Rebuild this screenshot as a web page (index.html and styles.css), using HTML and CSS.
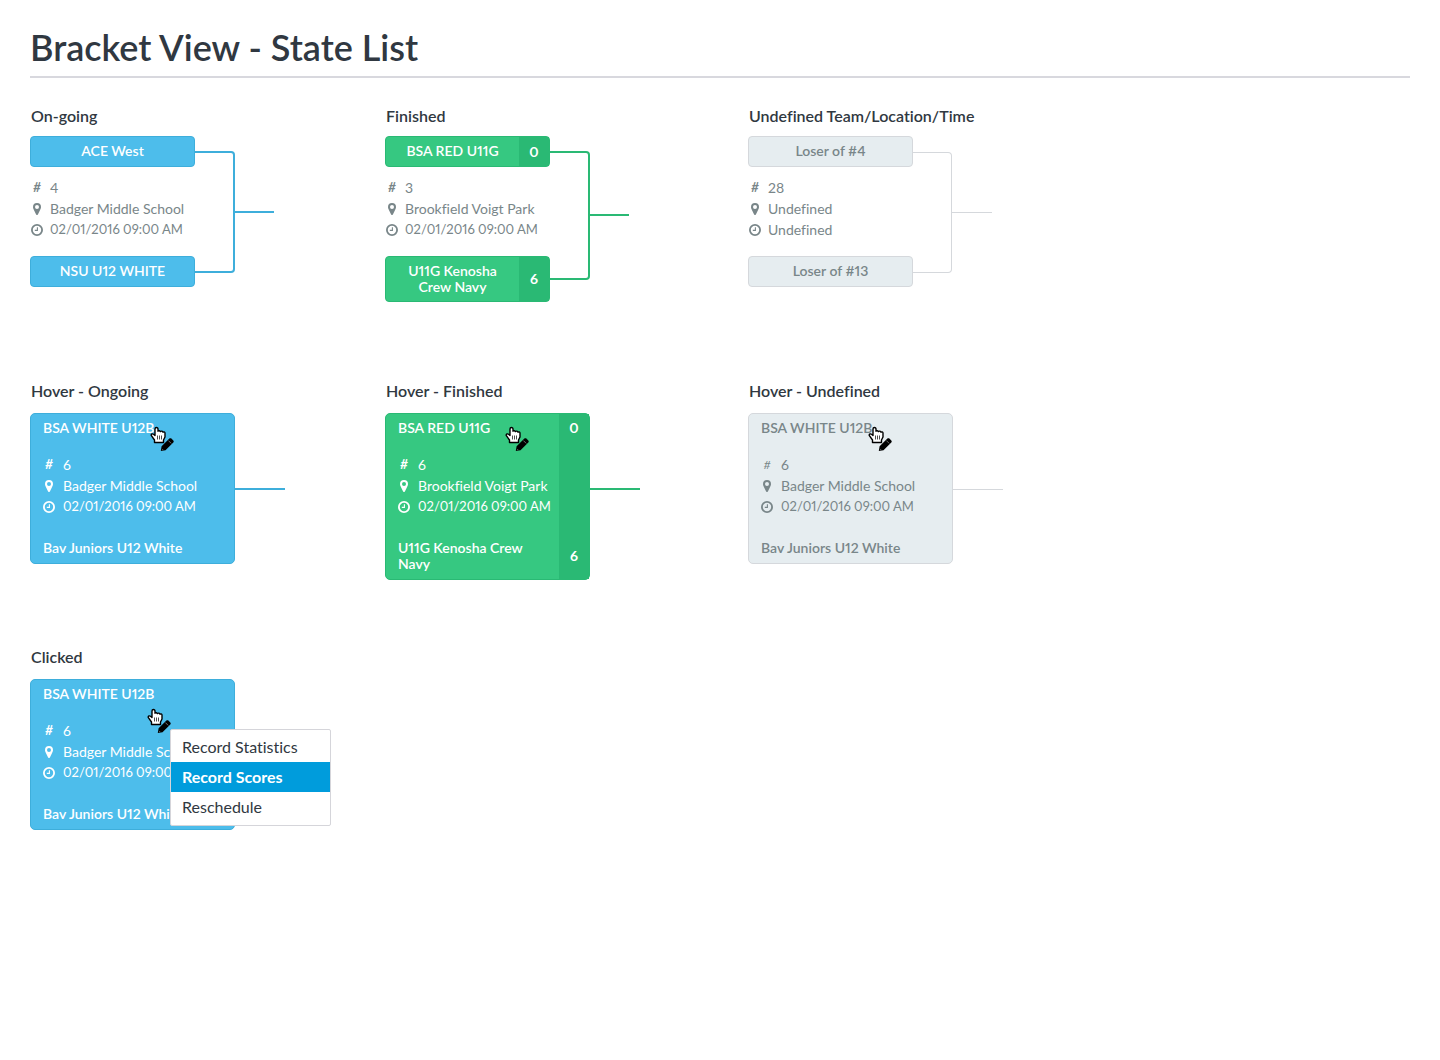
FILE: index.html
```html
<!DOCTYPE html>
<html lang="en">
<head>
<meta charset="utf-8">
<meta name="viewport" content="width=device-width, initial-scale=1">
<title>Bracket View - State List</title>
<link rel="stylesheet" href="styles.css">
</head>
<body>
<svg class="sprite" aria-hidden="true">
  <symbol id="pin" viewBox="0 0 12 12"><path fill-rule="evenodd" d="M6 0a4 4 0 0 0-4 4c0 1.200.4 1.900.8 2.700L5.100 11.500c.3.700 1.500.700 1.800 0L9.200 6.700C9.600 5.900 10 5.200 10 4a4 4 0 0 0-4-4zM6 2.100a2 2 0 1 1 0 4 2 2 0 0 1 0-4z"/></symbol>
  <symbol id="clock" viewBox="0 0 12 12"><circle cx="6" cy="6" r="5.100" fill="none" stroke="currentColor" stroke-width="1.800"/><path d="M6.400 3.200v3.200H3.800" fill="none" stroke="currentColor" stroke-width="1.100"/></symbol>
  <symbol id="hand" viewBox="0 0 24 26">
    <path d="M6.500 1.500c-1 0-1.500.7-1.500 1.500v6.500L3.500 8.200C2.600 7.500 1 8 1.200 9.300L4.500 14v2.500h9V14l1.500-3V7c0-1-1.300-1.500-2-.8-.3-1.200-1.900-1.400-2.500-.6-.5-1-1.900-1.200-2.500-.4V3c0-.8-.500-1.500-1.500-1.500z" fill="#fff" stroke="#000" stroke-width="1.400" stroke-linejoin="round"/>
    <path d="M7.500 9.500v4M9.500 9.500v4M11.500 9.500v4" stroke="#000" stroke-width=".7"/>
    <path d="M10.800 25l.8-4.800 7.800-7.600c.6-.6 1.400-.6 2 0l1.900 1.900c.6.6.6 1.400 0 2l-7.800 7.700z" fill="#000"/>
    <path d="M12.200 23.600l1 .1M18.400 14.600l2.800 2.800" stroke="#bbb" stroke-width=".6"/>
  </symbol>
</svg>
<main class="page">
  <h1 class="title">Bracket View - State List</h1>
  <div class="states">

    <section class="state">
      <h2 class="label">On-going</h2>
      <div class="bracket ongoing">
        <div class="match">
          <div class="team"><span class="name">ACE West</span></div>
          <ul class="info">
            <li><b class="hash">#</b>4</li>
            <li><svg class="icon"><use href="#pin"/></svg>Badger Middle School</li>
            <li class="time"><svg class="icon"><use href="#clock"/></svg>02/01/2016 09:00 AM</li>
          </ul>
          <div class="team"><span class="name">NSU U12 WHITE</span></div>
        </div>
        <div class="joint"></div>
        <div class="out"></div>
      </div>
    </section>

    <section class="state">
      <h2 class="label">Finished</h2>
      <div class="bracket finished">
        <div class="match">
          <div class="team"><span class="name">BSA RED U11G</span><span class="score">0</span></div>
          <ul class="info">
            <li><b class="hash">#</b>3</li>
            <li><svg class="icon"><use href="#pin"/></svg>Brookfield Voigt Park</li>
            <li class="time"><svg class="icon"><use href="#clock"/></svg>02/01/2016 09:00 AM</li>
          </ul>
          <div class="team"><span class="name">U11G Kenosha Crew Navy</span><span class="score">6</span></div>
        </div>
        <div class="joint"></div>
        <div class="out"></div>
      </div>
    </section>

    <section class="state">
      <h2 class="label">Undefined Team/Location/Time</h2>
      <div class="bracket undefined">
        <div class="match">
          <div class="team"><span class="name">Loser of #4</span></div>
          <ul class="info">
            <li><b class="hash">#</b>28</li>
            <li><svg class="icon"><use href="#pin"/></svg>Undefined</li>
            <li><svg class="icon"><use href="#clock"/></svg>Undefined</li>
          </ul>
          <div class="team"><span class="name">Loser of #13</span></div>
        </div>
        <div class="joint"></div>
        <div class="out"></div>
      </div>
    </section>

    <section class="state">
      <h2 class="label">Hover - Ongoing</h2>
      <div class="hover ongoing">
        <div class="card">
          <div class="body">
            <div class="name">BSA WHITE U12B</div>
            <ul class="info">
              <li><b class="hash">#</b>6</li>
              <li><svg class="icon"><use href="#pin"/></svg>Badger Middle School</li>
              <li class="time"><svg class="icon"><use href="#clock"/></svg>02/01/2016 09:00 AM</li>
            </ul>
            <div class="name">Bav Juniors U12 White</div>
          </div>
          <svg class="pointer"><use href="#hand"/></svg>
        </div>
        <div class="out"></div>
      </div>
    </section>

    <section class="state">
      <h2 class="label">Hover - Finished</h2>
      <div class="hover finished">
        <div class="card">
          <div class="body">
            <div class="name">BSA RED U11G</div>
            <ul class="info">
              <li><b class="hash">#</b>6</li>
              <li><svg class="icon"><use href="#pin"/></svg>Brookfield Voigt Park</li>
              <li class="time"><svg class="icon"><use href="#clock"/></svg>02/01/2016 09:00 AM</li>
            </ul>
            <div class="name">U11G Kenosha Crew Navy</div>
          </div>
          <div class="scores"><span>0</span><span>6</span></div>
          <svg class="pointer"><use href="#hand"/></svg>
        </div>
        <div class="out"></div>
      </div>
    </section>

    <section class="state">
      <h2 class="label">Hover - Undefined</h2>
      <div class="hover undefined">
        <div class="card">
          <div class="body">
            <div class="name">BSA WHITE U12B</div>
            <ul class="info">
              <li><span class="hash hash-light">#</span>6</li>
              <li><svg class="icon"><use href="#pin"/></svg>Badger Middle School</li>
              <li class="time"><svg class="icon"><use href="#clock"/></svg>02/01/2016 09:00 AM</li>
            </ul>
            <div class="name">Bav Juniors U12 White</div>
          </div>
          <svg class="pointer"><use href="#hand"/></svg>
        </div>
        <div class="out"></div>
      </div>
    </section>

    <section class="state">
      <h2 class="label">Clicked</h2>
      <div class="hover ongoing">
        <div class="card">
          <div class="body">
            <div class="name">BSA WHITE U12B</div>
            <ul class="info">
              <li><b class="hash">#</b>6</li>
              <li><svg class="icon"><use href="#pin"/></svg>Badger Middle School</li>
              <li class="time"><svg class="icon"><use href="#clock"/></svg>02/01/2016 09:00 AM</li>
            </ul>
            <div class="name">Bav Juniors U12 White</div>
          </div>
          <svg class="pointer pointer-clicked"><use href="#hand"/></svg>
          <div class="menu">
            <button type="button" class="item">Record Statistics</button>
            <button type="button" class="item active">Record Scores</button>
            <button type="button" class="item">Reschedule</button>
          </div>
        </div>
      </div>
    </section>

  </div>
</main>
</body>
</html>
```
FILE: styles.css
```css
* { box-sizing: border-box; }

body {
  margin: 0;
  background: #fff;
  color: #303841;
  font-family: Lato, "Liberation Sans", sans-serif;
  font-variant-numeric: proportional-nums;
  font-variant-ligatures: none;
}

.sprite { display: none; }

.page { padding: 23px 30px 40px; }

.title {
  margin: 0 0 28px;
  padding-bottom: 5px;
  border-bottom: 2px solid #d8d8de;
  font-size: 36px;
  line-height: 48px;
  font-weight: 600;
}

.states {
  display: grid;
  grid-template-columns: 355fr 363fr 662fr;
  grid-template-rows: 275px 266px auto;
}

.label {
  margin: 0;
  padding-left: 1px;
  font-size: 16px;
  line-height: 20px;
  font-weight: 600;
}

/* state colours */
.ongoing { --fill: #4dbdeb; --line: #3eaedb; --text: #fff; --stroke: 2px; }
.finished { --fill: #36c881; --line: #2ab974; --text: #fff; --stroke: 2px; }
.undefined { --fill: #e6edf0; --line: #d5d8dc; --text: #798689; --stroke: 1px; }

/* open bracket */
.bracket {
  display: flex;
  margin-top: 10px;
}

.match { width: 165px; }

.team {
  display: flex;
  min-height: 31px;
  border: 1px solid var(--line);
  border-radius: 4px;
  background: var(--fill);
  color: var(--text);
  font-size: 14px;
  line-height: 16px;
  font-weight: 600;
  text-align: center;
}

.team .name {
  flex: 1;
  padding: 6px 16px;
}

.score {
  display: flex;
  align-items: center;
  justify-content: center;
  width: 30px;
  background: var(--line);
  font-weight: 700;
}

.info {
  margin: 10px 0 16px;
  padding: 0 0 0 1px;
  list-style: none;
  color: #798689;
  font-size: 14px;
  line-height: 21px;
}

.info li {
  display: flex;
  align-items: center;
  gap: 7px;
  white-space: nowrap;
}

.info .time { font-size: 13px; }

.icon {
  flex: none;
  width: 12px;
  height: 12px;
  fill: currentColor;
}

.hash {
  flex: none;
  width: 12px;
  font-size: 13px;
  font-style: italic;
  text-align: center;
}

.hash-light { font-size: 12px; }

.joint {
  width: 40px;
  margin: 15px 0 14px;
  border: var(--stroke) solid var(--line);
  border-left: 0;
  border-radius: 0 4px 4px 0;
}

.out {
  width: 39px;
  height: var(--stroke);
  margin-top: 75px;
  background: var(--line);
}

.finished .joint { margin-bottom: 22px; }
.bracket.finished .out { margin-top: 78px; }

.undefined .joint {
  width: 39px;
  margin-top: 16px;
}

.undefined .out {
  width: 40px;
  margin-top: 76px;
}

/* closed card */
.hover {
  display: flex;
  margin-top: 12px;
}

.card {
  position: relative;
  display: flex;
  width: 205px;
  border: 1px solid var(--line);
  border-radius: 5px;
  background: var(--fill);
  color: var(--text);
  font-size: 14px;
  line-height: 16px;
}

.body {
  flex: 1;
  min-width: 0;
  padding: 6px 0 7px 12px;
}

.card .name {
  padding-right: 12px;
  font-weight: 600;
}

.card .info {
  margin: 18px 0 23px;
  padding: 0;
  color: inherit;
}

.card .info li { gap: 8px; }

.scores {
  display: flex;
  flex-direction: column;
  justify-content: space-between;
  width: 30px;
  padding: 6px 0 7px;
  background: var(--line);
  font-weight: 700;
  text-align: center;
}

.scores span:last-child { line-height: 32px; }

.hover .out { width: 50px; }

.pointer {
  position: absolute;
  top: 12px;
  left: 119px;
  width: 24px;
  height: 26px;
}

.pointer-clicked {
  top: 28px;
  left: 116px;
}

.menu {
  position: absolute;
  top: 49px;
  left: 139px;
  width: 161px;
  padding: 2px 0 3px;
  border: 1px solid #d5d5da;
  border-radius: 2px;
  background: #fff;
}

.item {
  display: block;
  width: 100%;
  height: 30px;
  padding: 0 11px;
  border: 0;
  background: none;
  color: #303841;
  font: inherit;
  font-size: 16px;
  text-align: left;
}

.item.active {
  background: #009cdc;
  color: #fff;
  font-weight: 700;
}
```
